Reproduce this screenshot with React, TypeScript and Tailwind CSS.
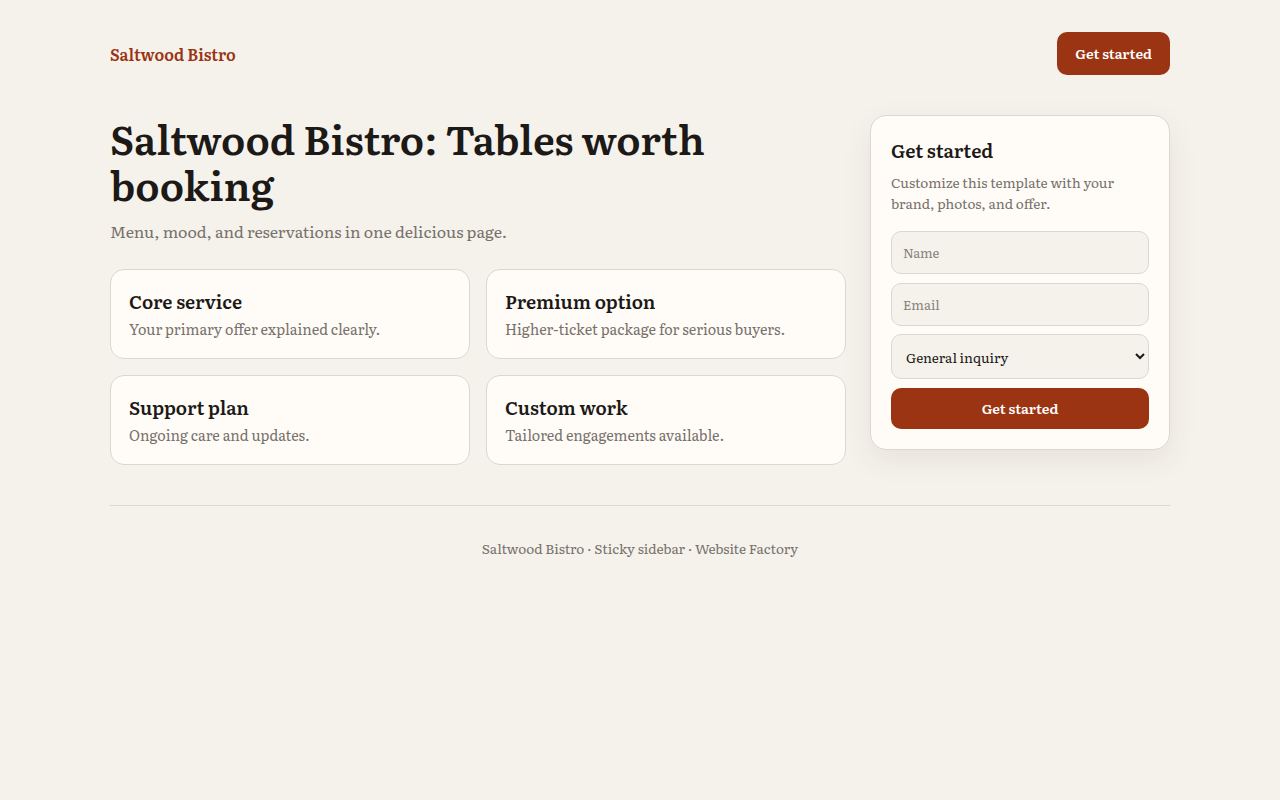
const services = [
  { title: 'Core service', text: 'Your primary offer explained clearly.' },
  { title: 'Premium option', text: 'Higher-ticket package for serious buyers.' },
  { title: 'Support plan', text: 'Ongoing care and updates.' },
  { title: 'Custom work', text: 'Tailored engagements available.' },
];

export default function App() {
  return (
    <div className="min-h-screen bg-[#f5f2ec] text-[#1c1917] font-['Literata','Source_Serif_Pro','DejaVu_Serif',serif]">
      <div className="max-w-[1060px] mx-auto">
        {/* Header */}
        <header className="flex items-center justify-between pt-8 pb-10">
          <span className="text-[16px] font-semibold text-[#9a3412]">Saltwood Bistro</span>
          <button className="bg-[#9a3412] text-white text-[14px] font-semibold px-[18px] h-[43px] rounded-[10px]">
            Get started
          </button>
        </header>

        {/* Main */}
        <main className="grid grid-cols-[1fr_300px] gap-6 items-start">
          <div>
            <h1 className="text-[40px] leading-[46px] font-semibold">
              Saltwood Bistro: Tables worth booking
            </h1>
            <p className="text-[16px] text-[#78716c] mt-[12px]">Menu, mood, and reservations in one delicious page.</p>
            <div className="grid grid-cols-2 gap-4 mt-[26px]">
              {services.map((s) => (
                <div key={s.title} className="bg-[#fffcf7] border border-[#dcd7cf] rounded-[14px] px-[18px] pt-[19px] pb-[18px]">
                  <h3 className="text-[18.5px] leading-[24px] font-semibold">{s.title}</h3>
                  <p className="text-[14.4px] leading-[22px] text-[#78716c] mt-[5px]">{s.text}</p>
                </div>
              ))}
            </div>
          </div>

          {/* Sidebar */}
          <aside className="bg-[#fffcf7] border border-[#dcd7cf] rounded-[16px] px-5 pt-5 pb-5 shadow-[0_10px_30px_rgba(60,40,20,0.08)]">
            <h2 className="text-[18.7px] font-semibold leading-[28px]">Get started</h2>
            <p className="text-[13.6px] leading-[21px] text-[#78716c] mt-[8px]">
              Customize this template with your brand, photos, and offer.
            </p>
            <form className="flex flex-col mt-[17px]" onSubmit={(e) => e.preventDefault()}>
              <input
                placeholder="Name"
                className="h-[43px] rounded-[10px] border border-[#dcd7cf] bg-[#f5f2ec] px-[11px] text-[13px] placeholder:text-[#8a837c] outline-none"
              />
              <input
                placeholder="Email"
                className="h-[43px] mt-[9px] rounded-[10px] border border-[#dcd7cf] bg-[#f5f2ec] px-[11px] text-[13px] placeholder:text-[#8a837c] outline-none"
              />
              <select className="h-[45px] mt-[8px] rounded-[10px] border border-[#dcd7cf] bg-[#f5f2ec] px-[10px] text-[13.5px] outline-none">
                <option>General inquiry</option>
              </select>
              <button className="h-[41px] mt-[9px] rounded-[10px] bg-[#9a3412] text-white text-[14px] font-semibold">
                Get started
              </button>
            </form>
          </aside>
        </main>

        {/* Footer */}
        <footer className="mt-10 border-t border-[#dcd7cf] pt-[32px] text-center text-[13.6px] text-[#78716c]">
          Saltwood Bistro · Sticky sidebar · Website Factory
        </footer>
      </div>
    </div>
  );
}
